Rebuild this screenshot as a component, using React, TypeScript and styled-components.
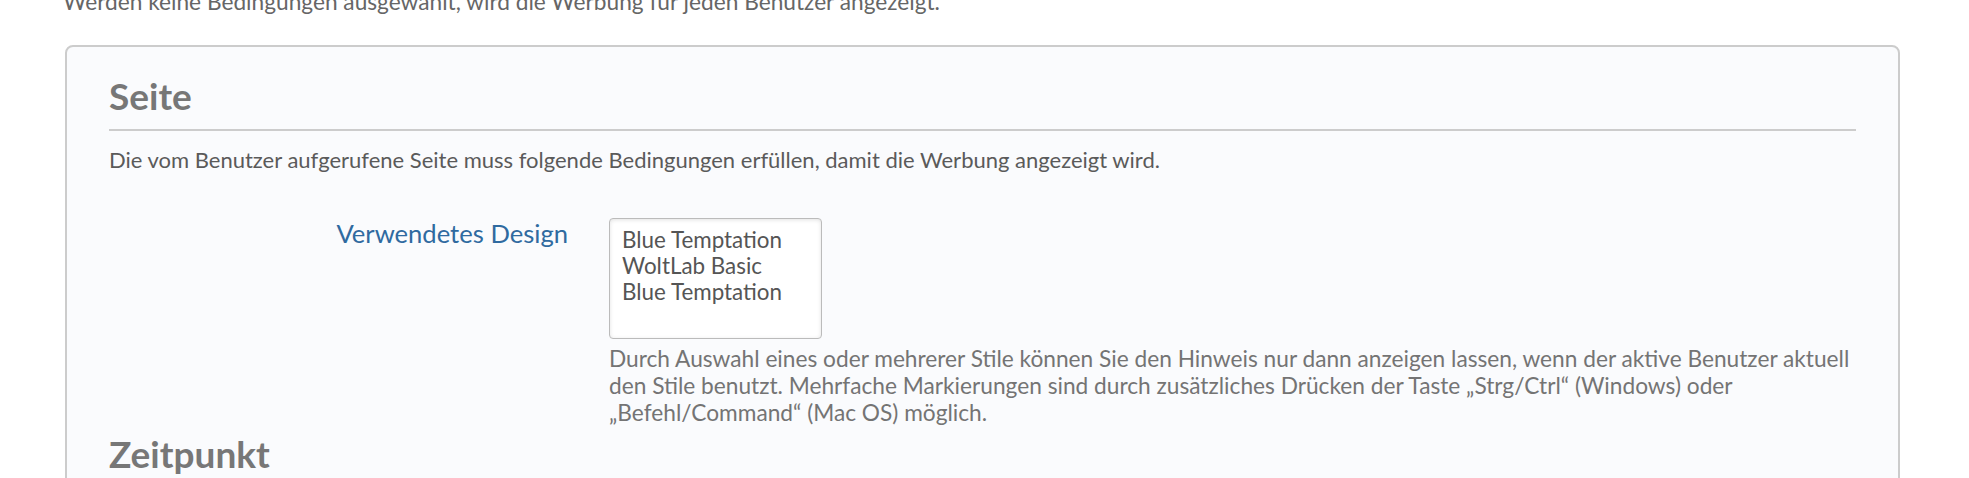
import React from "react";
import styled, { createGlobalStyle } from "styled-components";

const GlobalStyle = createGlobalStyle`
  body {
    margin: 0;
    background: #fff;
    font-family: Lato, "Open Sans", sans-serif;
  }
`

const Page = styled.div`
  padding: 0 69px 0 65px;
`

const TopNote = styled.p`
  margin: -12px 0 30px -2px;
  font-size: 22.7px;
  line-height: 27px;
  color: #666;
`

const Box = styled.div`
  border: 2px solid #ccc;
  border-radius: 8px;
  background: #fafbfd;
  padding: 27px 42px 40px;
`

const Section = styled.section`
  & + & {
    margin-top: 6px;
  }
`

const SectionTitle = styled.h2<{ $ruled?: boolean }>`
  margin: 0;
  font-size: 37px;
  line-height: 44px;
  font-weight: 700;
  color: #777;
  padding-bottom: ${p => p.$ruled ? '11px' : '0'};
  border-bottom: ${p => p.$ruled ? '2px solid #ccc' : 'none'};
`

const Description = styled.p`
  margin: 15px 0 0;
  font-size: 22px;
  line-height: 27px;
  color: #5a5a5a;
`

const Row = styled.dl`
  display: flex;
  gap: 41px;
  margin: 45px 0 0;
`

const Label = styled.dt`
  flex: 0 0 459px;
  text-align: right;
  font-size: 25.6px;
  line-height: 30px;
  color: #2f6aa0;
`

const Field = styled.dd`
  margin: 0;
  flex: 1;
`

const ListBox = styled.div`
  width: 199px;
  height: 105px;
  padding: 8px 0 6px 12px;
  border: 1px solid #bbb;
  border-radius: 4px;
  background: #fff;
  box-shadow: inset 0 1px 4px rgba(0, 0, 0, 0.12);
`

const Option = styled.div`
  font-size: 22.4px;
  line-height: 26px;
  color: #555;
`

const Help = styled.small`
  display: block;
  margin-top: 6px;
  font-size: 22.7px;
  line-height: 27px;
  color: #747474;
`

const styles = ["Blue Temptation", "WoltLab Basic", "Blue Temptation"];

const App = () => {
  return (
    <Page>
      <GlobalStyle />
      <TopNote>Werden keine Bedingungen ausgewählt, wird die Werbung für jeden Benutzer angezeigt.</TopNote>
      <Box>
        <Section>
          <SectionTitle $ruled>Seite</SectionTitle>
          <Description>Die vom Benutzer aufgerufene Seite muss folgende Bedingungen erfüllen, damit die Werbung angezeigt wird.</Description>
          <Row>
            <Label>Verwendetes Design</Label>
            <Field>
              <ListBox role="listbox" aria-multiselectable>
                {styles.map((name, i) => (
                  <Option role="option" key={i}>{name}</Option>
                ))}
              </ListBox>
              <Help>
                Durch Auswahl eines oder mehrerer Stile können Sie den Hinweis nur dann anzeigen lassen, wenn der aktive Benutzer aktuell den Stile benutzt. Mehrfache Markierungen sind durch zusätzliches Drücken der Taste „Strg/Ctrl“ (Windows) oder „Befehl/Command“ (Mac OS) möglich.
              </Help>
            </Field>
          </Row>
        </Section>
        <Section>
          <SectionTitle>Zeitpunkt</SectionTitle>
        </Section>
      </Box>
    </Page>
  );
};

export default App;
